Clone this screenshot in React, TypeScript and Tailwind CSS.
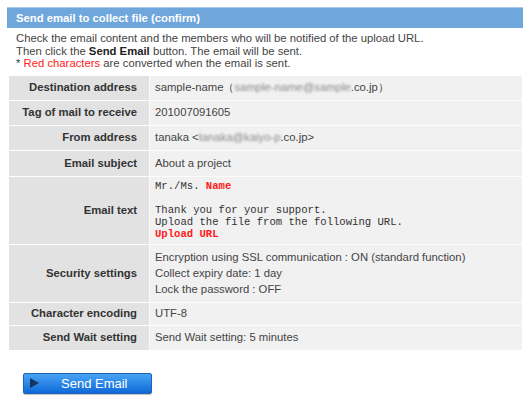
import React from 'react';

type Row = { label: string; h: string; body: React.ReactNode; pad?: string };

const Blur = ({ children }: { children: React.ReactNode }) => (
    <span className="blur-[1.2px] text-[#888]">{children}</span>
);

export default function App() {
    const rows: Row[] = [
        {
            label: 'Destination address',
            h: 'h-[25px]',
            body: (
                <span>
                    sample-name（<Blur>sample-name@sample</Blur>.co.jp）
                </span>
            ),
        },
        { label: 'Tag of mail to receive', h: 'h-[25px]', body: '201007091605' },
        {
            label: 'From address',
            h: 'h-[25px]',
            body: (
                <span>
                    tanaka &lt;<Blur>tanaka@kaiyo-p</Blur>.co.jp&gt;
                </span>
            ),
        },
        { label: 'Email subject', h: 'h-[26px]', body: 'About a project' },
        {
            label: 'Email text',
            h: 'h-[68px]',
            pad: 'pt-[3px]',
            body: (
                <div className="font-['Liberation_Mono',monospace] text-[10.6px] leading-[12px] text-[#333] whitespace-pre">
                    <div>
                        Mr./Ms. <span className="text-[#ff1a1a] font-bold">Name</span>
                    </div>
                    <div>&nbsp;</div>
                    <div>Thank you for your support.</div>
                    <div>Upload the file from the following URL.</div>
                    <div className="text-[#ff1a1a] font-bold">Upload URL</div>
                </div>
            ),
        },
        {
            label: 'Security settings',
            h: 'h-[58px]',
            pad: 'pt-[4px]',
            body: (
                <div className="leading-[16px]">
                    <div>Encryption using SSL communication : ON (standard function)</div>
                    <div>Collect expiry date: 1 day</div>
                    <div>Lock the password : OFF</div>
                </div>
            ),
        },
        { label: 'Character encoding', h: 'h-[23px]', body: 'UTF-8' },
        { label: 'Send Wait setting', h: 'h-[24px]', body: 'Send Wait setting: 5 minutes' },
    ];

    return (
        <div className="w-[530px] h-[417px] bg-white font-['Liberation_Sans',Arial,sans-serif] text-[#444] overflow-hidden">
            {/* title bar */}
            <div className="mx-[7px] mt-[7px] h-[21px] bg-[#6fa6dc] border-t border-[#a8c8ea] flex items-center pl-[9px] text-white font-bold text-[11.3px]">
                Send email to collect file (confirm)
            </div>

            {/* intro */}
            <div className="pl-[16px] pt-[4px] text-[11.3px] leading-[12.5px] text-[#444]">
                <div>Check the email content and the members who will be notified of the upload URL.</div>
                <div>
                    Then click the <span className="font-bold text-[#222]">Send Email</span> button. The email will be sent.
                </div>
                <div>
                    * <span className="text-[#ff2020]">Red characters</span> are converted when the email is sent.
                </div>
            </div>

            {/* table */}
            <div className="ml-[9px] mt-[6px] w-[513px] flex flex-col">
                {rows.map((r, i) => (
                    <div
                        key={r.label}
                        className={`flex ${r.h} ${i < rows.length - 1 ? 'border-b border-dotted border-[#fbfbfb]' : ''}`}
                    >
                        <div className="w-[141px] shrink-0 bg-[#e2e2e2] border-r border-[#fbfbfb] flex items-center justify-end pr-[12px] text-[11.3px] font-bold text-[#333]">
                            {r.label}
                        </div>
                        <div
                            className={`flex-1 bg-[#f1f1f1] pl-[5px] text-[11.3px] text-[#444] ${
                                r.pad ? r.pad : 'flex items-center'
                            }`}
                        >
                            {r.body}
                        </div>
                    </div>
                ))}
            </div>

            {/* button */}
            <button className="ml-[23px] mt-[23px] w-[129px] h-[21px] rounded-[2px] border border-[#1f62b8] bg-gradient-to-b from-[#48a4f5] to-[#0b69d8] flex items-center shadow-[0_1px_1px_rgba(0,0,0,0.25)]">
                <svg width="9" height="10" viewBox="0 0 9 10" className="ml-[6px]">
                    <path d="M0 0 L9 5 L0 10 Z" fill="#16365f" />
                </svg>
                <span className="ml-[22px] text-white text-[13px] leading-none">Send Email</span>
            </button>
        </div>
    );
}
